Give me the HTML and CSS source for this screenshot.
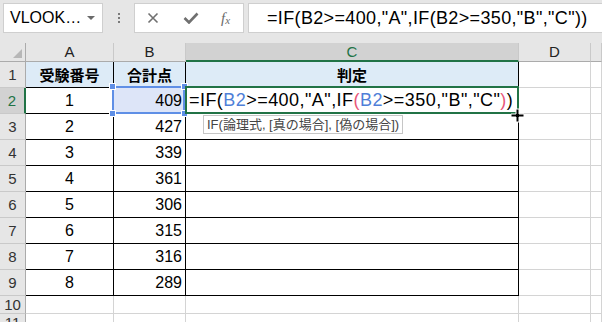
FILE: index.html
```html
<!DOCTYPE html>
<html lang="ja">
<head>
  <meta charset="UTF-8">
  <title>判定</title>
  <link rel="stylesheet" href="styles.css">
</head>
<body>
  <div class="toolbar">
    <div class="namebox"><span>VLOOK…</span><span class="caret"></span></div>
    <div class="grip"><i></i><i></i><i></i></div>
    <div class="fxbtns">
      <svg width="12" height="12" viewBox="0 0 12 12"><path d="M1.5 1.5 L10.5 10.5 M10.5 1.5 L1.5 10.5" stroke="#707070" stroke-width="1.6" fill="none"/></svg>
      <svg width="16" height="12" viewBox="0 0 16 12"><path d="M1.5 6 L6 10.5 L14.5 1.5" stroke="#707070" stroke-width="2.6" fill="none"/></svg>
      <span class="fx">f<sub>x</sub></span>
    </div>
    <div class="formula">=IF(B2&gt;=400,"A",IF(B2&gt;=350,"B","C"))</div>
  </div>

  <div class="sheet">
    <div class="h corner"><span class="tri"></span></div>
    <div class="h">A</div><div class="h">B</div><div class="h sel">C</div><div class="h">D</div><div class="h"></div>

    <div class="rh">1</div>
    <div class="c t head">受験番号</div><div class="c t head">合計点</div><div class="c t head">判定</div><div class="c"></div><div class="c"></div>

    <div class="rh sel">2</div>
    <div class="c t ctr">1</div><div class="c t num ref">409</div>
    <div class="c t edit">=IF(<span class="b">B2</span>&gt;=400,"A",IF<span class="p">(</span><span class="b">B2</span>&gt;=350,"B","C"<span class="p">)</span>)</div>
    <div class="c"></div><div class="c"></div>

    <div class="rh">3</div>
    <div class="c t ctr">2</div><div class="c t num">427</div><div class="c t"></div><div class="c"></div><div class="c"></div>
    <div class="rh">4</div>
    <div class="c t ctr">3</div><div class="c t num">339</div><div class="c t"></div><div class="c"></div><div class="c"></div>
    <div class="rh">5</div>
    <div class="c t ctr">4</div><div class="c t num">361</div><div class="c t"></div><div class="c"></div><div class="c"></div>
    <div class="rh">6</div>
    <div class="c t ctr">5</div><div class="c t num">306</div><div class="c t"></div><div class="c"></div><div class="c"></div>
    <div class="rh">7</div>
    <div class="c t ctr">6</div><div class="c t num">315</div><div class="c t"></div><div class="c"></div><div class="c"></div>
    <div class="rh">8</div>
    <div class="c t ctr">7</div><div class="c t num">316</div><div class="c t"></div><div class="c"></div><div class="c"></div>
    <div class="rh">9</div>
    <div class="c t ctr">8</div><div class="c t num">289</div><div class="c t"></div><div class="c"></div><div class="c"></div>
    <div class="rh">10</div>
    <div class="c"></div><div class="c"></div><div class="c"></div><div class="c"></div><div class="c"></div>
    <div class="rh">11</div>
    <div class="c"></div><div class="c"></div><div class="c"></div><div class="c"></div><div class="c"></div>

    <!-- reference frame around B2 -->
    <div class="refbox">
      <i class="hd tl"></i><i class="hd tr"></i><i class="hd bl"></i><i class="hd br"></i>
    </div>
    <!-- active cell C2 -->
    <div class="active"></div>
    <div class="tip">IF(論理式, [真の場合], [偽の場合])</div>
    <svg class="cursor" width="15" height="15" viewBox="0 0 15 15">
      <path d="M6 1h3v5h5v3h-5v5h-3v-5h-5v-3h5z" fill="#000" stroke="#fff" stroke-width="1"/>
    </svg>
  </div>
</body>
</html>
```

FILE: styles.css
```css
html, body { margin: 0; padding: 0; }
body { width: 602px; height: 322px; overflow: hidden; background: #fff; font-family: "Liberation Sans", "Noto Sans CJK JP", sans-serif; color: #000; }

/* formula bar */
.toolbar { height: 43px; background: #e6e6e6; display: flex; align-items: flex-start; padding: 3px 0 0 3px; box-sizing: border-box; }
.namebox { width: 100px; height: 30px; box-sizing: border-box; background: #fff; border: 1px solid #cfcfcf; display: flex; align-items: center; padding-left: 6px; font-size: 16px; }
.namebox span:first-child { flex: 1; }
.caret { width: 0; height: 0; border-left: 4px solid transparent; border-right: 4px solid transparent; border-top: 4px solid #6a6a6a; margin-right: 7px; }
.grip { width: 31px; height: 30px; display: flex; flex-direction: column; align-items: center; justify-content: center; gap: 2px; }
.grip i { display: block; width: 2px; height: 2px; background: #7a7a7a; }
.fxbtns { width: 110px; height: 30px; box-sizing: border-box; background: #fff; border: 1px solid #cfcfcf; display: flex; align-items: center; padding-left: 12px; gap: 24px; }
.fx { font-family: "Liberation Serif", serif; font-style: italic; font-size: 15px; color: #6a6a6a; margin-left: -2px; }
.fx sub { font-size: 11px; vertical-align: -1px; }
.formula { flex: 1; margin-left: 4px; height: 30px; box-sizing: border-box; background: #fff; border: 1px solid #cfcfcf; border-right: none; padding-left: 18px; font-size: 18px; letter-spacing: 0.35px; line-height: 28px; white-space: nowrap; }

/* sheet grid */
.sheet { position: relative; display: grid; grid-template-columns: 26px 88px 72px 333px 72px 1fr; grid-template-rows: 19px repeat(9, 26px) 18px 18px; }
.sheet > div { box-sizing: border-box; }
.h { background: #e6e6e6; border-right: 1px solid #c9c9c9; border-bottom: 1px solid #ababab; text-align: center; font-size: 15px; line-height: 18px; color: #222; }
.h.corner { position: relative; border-right-color: #ababab; }
.tri { position: absolute; right: 3px; bottom: 3px; width: 0; height: 0; border-left: 9px solid transparent; border-bottom: 9px solid #b7b7b7; }
.h.sel { background: #d2d2d2; color: #217346; border-bottom: 2px solid #217346; }
.rh { background: #e6e6e6; border-right: 1px solid #ababab; border-bottom: 1px solid #c9c9c9; text-align: center; font-size: 15px; color: #333; display: flex; align-items: center; justify-content: center; }
.rh.sel { background: #d2d2d2; color: #217346; border-right: 2px solid #217346; }
.c { border-right: 1px solid #d4d4d4; border-bottom: 1px solid #d4d4d4; font-size: 16px; display: flex; align-items: center; white-space: nowrap; }
.c.t { border-right-color: #000; border-bottom-color: #000; }
.c.head { background: #ddebf7; font-weight: bold; font-size: 15px; justify-content: center; }
.ctr { justify-content: center; }
.num { justify-content: flex-end; padding-right: 3px; }
.ref { background: #dde5f8; }
.edit { font-size: 18px; letter-spacing: 0.45px; padding-left: 3px; }
.edit .b { color: #4f7fd8; }
.edit .p { color: #e8577a; }

/* overlays */
.refbox { position: absolute; left: 112px; top: 43px; width: 73px; height: 28px; border: 2px solid #5f8fe6; }
.hd { position: absolute; width: 5px; height: 5px; background: #5f8fe6; border: 1px solid #fff; }
.hd.tl { left: -5px; top: -5px; }
.hd.tr { right: -5px; top: -5px; }
.hd.bl { left: -5px; bottom: -5px; }
.hd.br { right: -5px; bottom: -5px; }
.active { position: absolute; left: 185px; top: 43px; width: 334px; height: 28px; border: 2px solid #217346; }
.tip { position: absolute; left: 203px; top: 72px; height: 19px; line-height: 18px; box-sizing: border-box; padding: 0 3px; background: #fff; border: 1px solid #c6c6c6; font-size: 13px; color: #444; white-space: nowrap; }
.cursor { position: absolute; left: 510px; top: 65px; }
```
